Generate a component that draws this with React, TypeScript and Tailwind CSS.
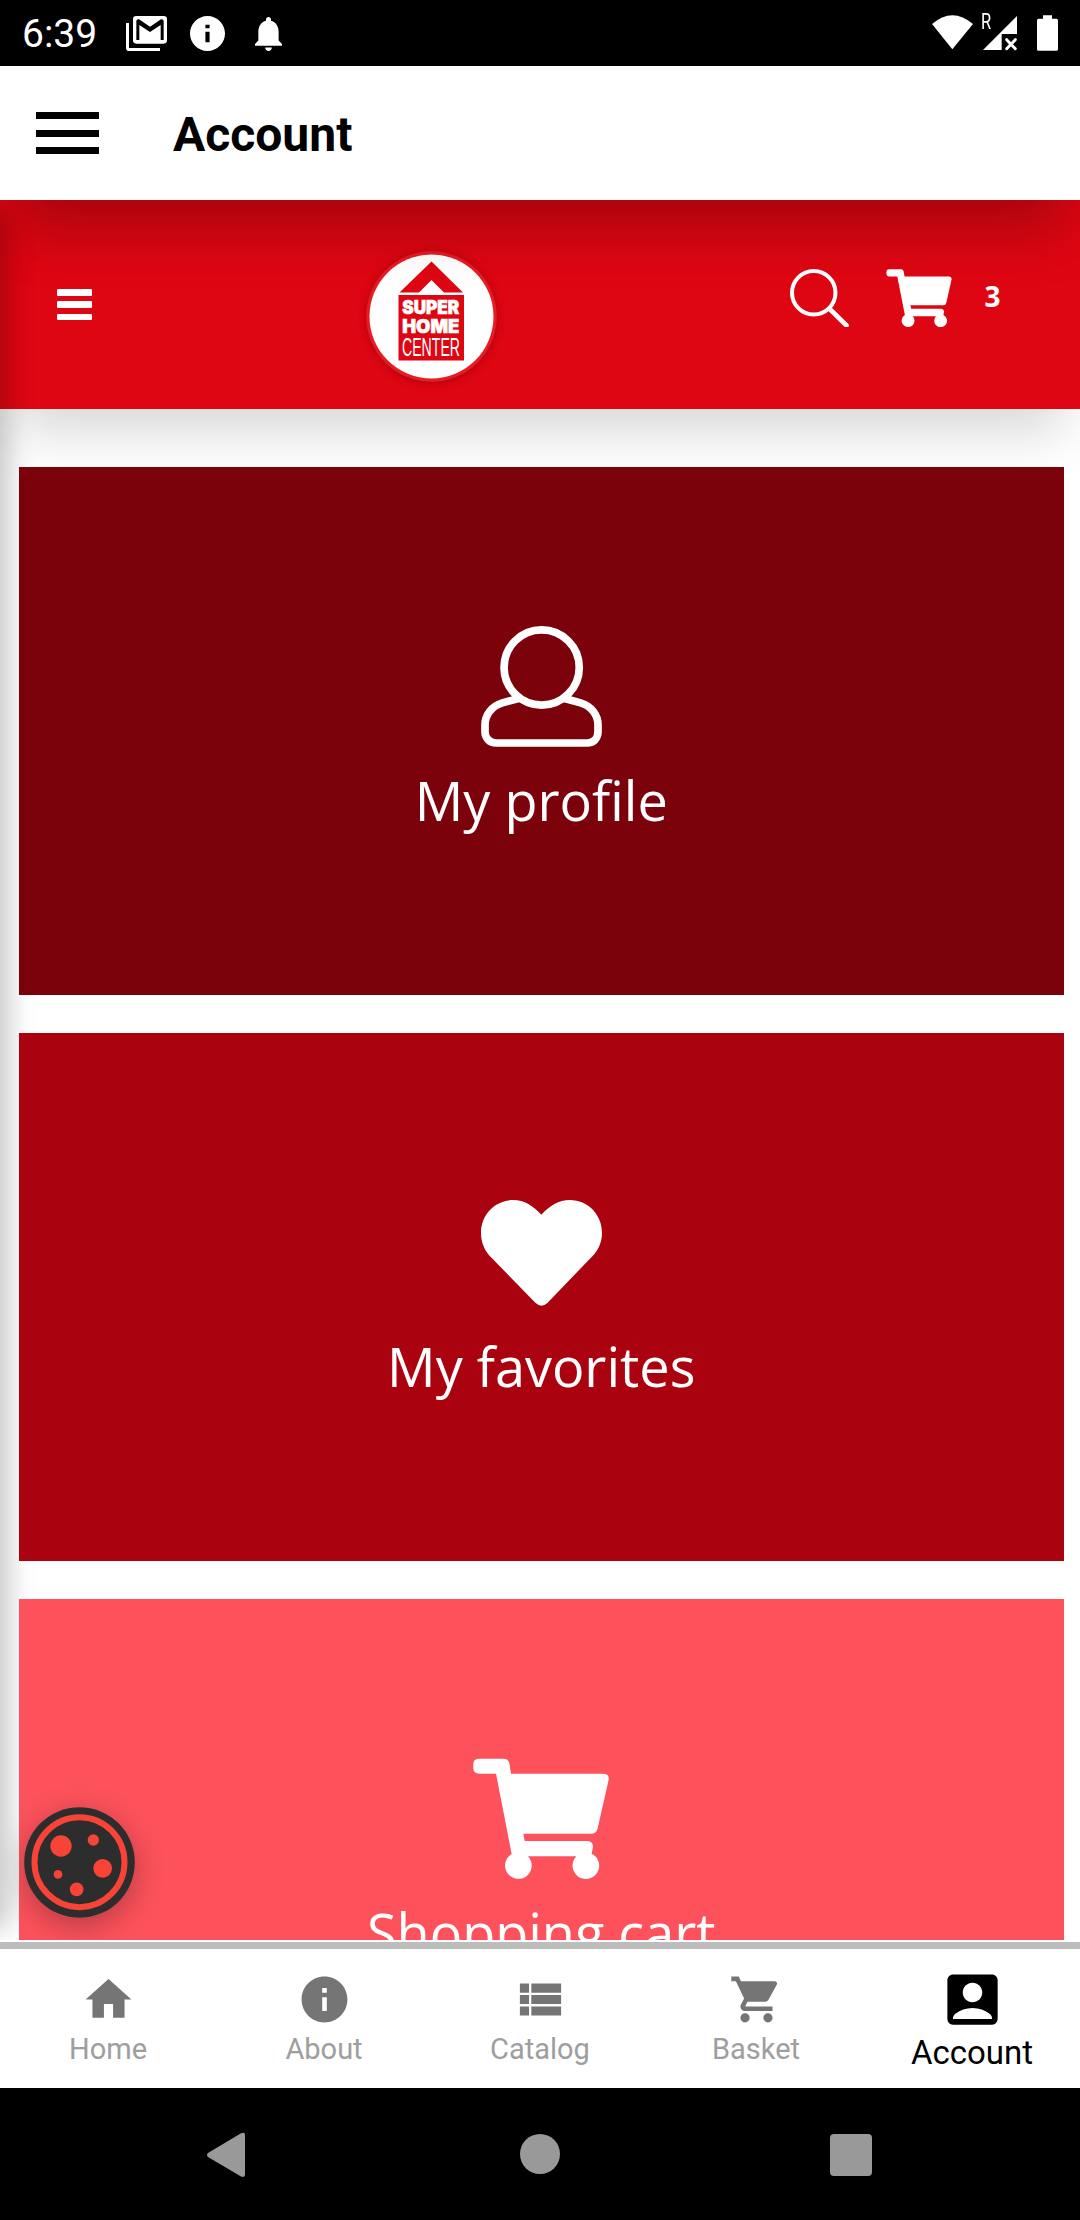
import type { ReactNode } from "react";

function StatusBar() {
  return (
    <div className="flex h-[66px] shrink-0 items-start bg-black text-white">
      <span className="ml-[22px] mt-[11px] w-[76px] whitespace-nowrap font-['Roboto',sans-serif] text-[39px] leading-[46px]">
        6:39
      </span>
      <svg className="ml-[28px] mt-4" width="41" height="35" viewBox="0 0 123 105" fill="currentColor">
        <path d="M0 21h9v75h93v9H10Q0 105 0 95z" />
        <path
          fillRule="evenodd"
          d="M31 0h82q10 0 10 10v63q0 10-10 10H31q-10 0-10-10V10Q21 0 31 0zM31 72h9V27l32 21 32-21v45h9V16q0-7-8-6L72 32 39 10q-8-1-8 6z"
        />
      </svg>
      <svg className="ml-[23px] mt-4" width="35" height="35" viewBox="2 2 20 20" fill="currentColor">
        <path d="M12 2C6.48 2 2 6.48 2 12s4.480 10 10 10 10-4.480 10-10S17.520 2 12 2zm1.200 15h-2.400v-6h2.400v6zm0-8h-2.400V7h2.400v2z" />
      </svg>
      <svg className="ml-[30px] mt-[17px]" width="27" height="34" viewBox="4 2.500 16 19.500" preserveAspectRatio="none" fill="currentColor">
        <path d="M12 22c1.100 0 2-.9 2-2h-4c0 1.100.89 2 2 2zm6-6v-5c0-3.070-1.640-5.640-4.500-6.320V4c0-.83-.67-1.500-1.500-1.500s-1.500.67-1.500 1.500v.68C7.630 5.360 6 7.920 6 11v5l-2 2v1h16v-1l-2-2z" />
      </svg>
      <svg className="ml-auto mt-[15px]" width="41" height="35" viewBox="0 0 123 105" fill="currentColor">
        <path d="M0 27Q61-26 123 27L61 103z" />
      </svg>
      <span className="ml-2 mt-[11px] w-[10px] font-['Roboto',sans-serif] text-[22px] leading-[22px]">
        <span className="block origin-left scale-x-75">R</span>
      </span>
      <svg className="-ml-2 mt-4" width="35" height="35" viewBox="0 0 105 105" fill="currentColor">
        <path d="M102 0v54H56v48H0z" />
        <path d="M71 71l26 27M97 71l-26 27" stroke="currentColor" strokeWidth="9" strokeLinecap="round" />
      </svg>
      <svg className="ml-[19px] mr-[22px] mt-[15px]" width="21" height="36" viewBox="0 0 63 107" fill="currentColor">
        <path d="M18 0h27v11h13q5 0 5 5v86q0 5-5 5H5q-5 0-5-5V16q0-5 5-5h13z" />
      </svg>
    </div>
  );
}

function AppBar() {
  return (
    <div className="relative z-20 flex h-[134.300px] shrink-0 items-start bg-white">
      <div className="ml-9 mt-[46px] flex w-[63px] flex-col gap-[10.500px]">
        <div className="h-[7px] bg-black" />
        <div className="h-[7px] bg-black" />
        <div className="h-[7px] bg-black" />
      </div>
      <h1 className="ml-[74px] mt-[41px] font-['Roboto',sans-serif] text-[48px] font-bold leading-[56px] text-black">
        Account
      </h1>
    </div>
  );
}

function Logo() {
  return (
    <svg className="overflow-visible" width="131" height="131" viewBox="0 0 131 131">
      <circle cx="65.500" cy="65.500" r="65.300" fill="#e81a24" className="drop-shadow-[0_1px_4px_rgba(90,0,0,0.400)]" />
      <circle cx="65.500" cy="65.500" r="62" fill="#fff" />
      <path d="M65.500 10.500L97 41.500H78L65.500 29 53 41.500H33.500z" fill="#de0612" />
      <path d="M32.500 44H98v65.500H32.500z" fill="#de0612" />
      <g fill="#fff" fontFamily="'Inter', sans-serif">
        <text x="36.300" y="63" fontSize="18.500" fontWeight="900" stroke="#fff" strokeWidth="0.600" textLength="57" lengthAdjust="spacingAndGlyphs">
          SUPER
        </text>
        <text x="36.300" y="81.500" fontSize="18.500" fontWeight="900" stroke="#fff" strokeWidth="0.600" textLength="57" lengthAdjust="spacingAndGlyphs">
          HOME
        </text>
        <text x="36" y="105" fontSize="26" fontFamily="'Liberation Sans', sans-serif" textLength="58" lengthAdjust="spacingAndGlyphs">
          CENTER
        </text>
      </g>
    </svg>
  );
}

function CartIcon({ className }: { className: string }) {
  return (
    <svg className={className} viewBox="372 85 408 361" fill="#fff">
      <path d="M388 86h76q14 0 17 14l5 31h278q17 1 15 18l-33 146q-4 16-17 16H523l4 22h189q16 2 16 18l-4 20a40 40 0 1 1-46 8H537a40 40 0 1 1-49-7L441 131h-53q-15-1-15-16v-13q0-15 15-16z" />
    </svg>
  );
}

function PersonIcon() {
  return (
    <svg width="121" height="121" viewBox="274 78 362 362" fill="none" stroke="#fff" strokeWidth="23">
      <circle cx="455.500" cy="202" r="112.500" />
      <path d="M386 295l-48 13C305 318 286 345 286 374v20c0 20 14 34 33 34h273c19 0 32-14 32-34v-20c0-29-19-56-52-66l-48-13" />
    </svg>
  );
}

function HeartIcon() {
  return (
    <svg width="121" height="106" viewBox="335 90 361 317" preserveAspectRatio="none" fill="#fff">
      <path d="M431 90c33 0 60 18 84 44 24-26 52-44 85-44 54 0 96 44 96 98 0 26-9 47-23 64L533 398q-17 16-35 0L359 255c-15-18-24-40-24-67 0-54 42-98 96-98z" />
    </svg>
  );
}

function SiteHeader() {
  return (
    <div className="relative flex h-[209.200px] shrink-0 items-start bg-[#de0612] shadow-[0_38px_52px_-16px_rgba(0,0,0,0.160)]">
      <div className="ml-[57px] mt-[89px] flex w-[35px] flex-col gap-[5.500px]">
        <div className="h-[6.700px] rounded-[1px] bg-white" />
        <div className="h-[6.700px] rounded-[1px] bg-white" />
        <div className="h-[6.700px] rounded-[1px] bg-white" />
      </div>
      <div className="ml-[274px] mt-[50.500px]">
        <Logo />
      </div>
      <svg className="ml-[293px] mt-[68.700px]" width="58.500" height="58.500" viewBox="89 237 175 175" fill="none" stroke="#fff">
        <circle cx="160" cy="308" r="65" strokeWidth="12" />
        <path d="M207 356l51 50" strokeWidth="14" strokeLinecap="round" />
      </svg>
      <CartIcon className="ml-[37px] mt-[68.700px] h-[58px] w-[66px]" />
      <span className="ml-[33px] mt-[77px] font-['Open_Sans',sans-serif] text-[28px] font-bold leading-[38px] text-white">
        3
      </span>
    </div>
  );
}

function Card({ color, pad, gap, icon, label }: { color: string; pad: string; gap: string; icon: ReactNode; label: string }) {
  return (
    <div className={`relative z-10 flex h-[528px] shrink-0 flex-col items-center ${color} ${pad} ${gap}`}>
      {icon}
      <span className="whitespace-nowrap font-['Open_Sans',sans-serif] text-[54px] leading-[74px] text-white">{label}</span>
    </div>
  );
}

function CookieButton() {
  return (
    <div className="absolute left-6 top-[1607px] z-20 rounded-full shadow-[0_8px_30px_rgba(0,0,0,0.280)]">
      <svg width="111" height="111" viewBox="72 83 333 333">
        <circle cx="238.500" cy="249.500" r="166" fill="#2d2d2d" />
        <circle cx="238.500" cy="248.500" r="135" fill="none" stroke="#f74436" strokeWidth="18" />
        <g fill="#f74436">
          <circle cx="183" cy="200" r="32" />
          <circle cx="280" cy="182" r="17" />
          <circle cx="308" cy="267" r="28" />
          <circle cx="174" cy="285" r="13" />
          <circle cx="230" cy="330" r="20.500" />
        </g>
      </svg>
    </div>
  );
}

const tabs = [
  { label: "Home", d: "M10 20v-6h4v6h5v-8h3L12 3 2 12h3v8z" },
  { label: "About", d: "M12 2C6.480 2 2 6.480 2 12s4.480 10 10 10 10-4.480 10-10S17.520 2 12 2zm1 15h-2v-6h2v6zm0-8h-2V7h2v2z" },
  { label: "Catalog", d: "M3 14h4v-4H3v4zm0 5h4v-4H3v4zM3 9h4V5H3v4zm5 5h13v-4H8v4zm0 5h13v-4H8v4zM8 5v4h13V5H8z" },
  {
    label: "Basket",
    d: "M7 18c-1.100 0-1.990.9-1.990 2S5.900 22 7 22s2-.9 2-2-.9-2-2-2zM1 2v2h2l3.600 7.590-1.350 2.450c-.16.28-.25.61-.25.96 0 1.100.9 2 2 2h12v-2H7.420c-.14 0-.25-.11-.25-.25l.03-.12.9-1.630h7.450c.75 0 1.410-.41 1.750-1.030l3.580-6.490c.08-.14.12-.31.12-.48 0-.55-.45-1-1-1H5.210l-.94-2H1zm16 16c-1.100 0-1.990.9-1.990 2s.89 2 1.990 2 2-.9 2-2-.9-2-2-2z",
  },
];

function TabBar() {
  return (
    <div className="relative z-30 flex h-[148px] shrink-0 flex-col bg-white font-['Roboto',sans-serif]">
      <div className="mt-[2px] h-[7px] shrink-0 bg-[#bdbdbd]" />
      <div className="grid flex-1 grid-cols-5">
        {tabs.map((t) => (
          <div key={t.label} className="flex flex-col items-center pt-[23px] text-[#9e9e9e]">
            <svg width="55" height="55" viewBox="0 0 24 24" fill="#757575">
              <path d={t.d} />
            </svg>
            <span className="mt-[5px] text-[29px] leading-[34px]">{t.label}</span>
          </div>
        ))}
        <div className="flex flex-col items-center pt-[17px] text-black">
          <svg width="67" height="67" viewBox="0 0 24 24" fill="currentColor">
            <path d="M19 3H5c-1.100 0-2 .9-2 2v14c0 1.100.9 2 2 2h14c1.100 0 2-.9 2-2V5c0-1.100-.9-2-2-2zm-7 3c1.930 0 3.500 1.570 3.500 3.500S13.930 13 12 13s-3.500-1.570-3.500-3.500S10.070 6 12 6zm7 13H5v-.23c0-.62.28-1.200.76-1.580C7.470 15.820 9.640 15 12 15s4.530.82 6.240 2.190c.48.38.76.97.76 1.580V19z" />
          </svg>
          <span className="mt-px text-[33px] leading-[38px]">Account</span>
        </div>
      </div>
    </div>
  );
}

function SystemNav() {
  return (
    <div className="flex h-[132px] shrink-0 items-start bg-black">
      <svg className="ml-[206px] mt-11" width="40" height="46" viewBox="0 0 40 46" fill="#999">
        <path d="M35 1.200Q39 -.5 39 3v39.500q0 3.500-4 2L2 25q-2-2 0-4z" />
      </svg>
      <div className="ml-[274px] mt-[46px] size-10 rounded-full bg-[#999]" />
      <div className="ml-[270px] mt-[46px] size-[42px] rounded-[4px] bg-[#999]" />
    </div>
  );
}

export default function App() {
  return (
    <div className="flex h-[2220px] w-[1080px] flex-col overflow-hidden bg-white">
      <StatusBar />
      <AppBar />
      <div className="relative flex h-[1739.700px] shrink-0 flex-col overflow-hidden bg-white">
        <SiteHeader />
        <div className="mt-[57.500px] flex flex-col gap-[38px] pl-[19px] pr-[16.500px]">
          <Card color="bg-[#7b010b]" pad="pt-[159px]" gap="gap-[16px]" icon={<PersonIcon />} label="My profile" />
          <Card color="bg-[#aa030f]" pad="pt-[167px]" gap="gap-[23px]" icon={<HeartIcon />} label="My favorites" />
          <Card
            color="bg-[#fd525b]"
            pad="pt-[159px]"
            gap="gap-[16px]"
            icon={<CartIcon className="h-[121px] w-[136px]" />}
            label="Shopping cart"
          />
        </div>
        {/* Shade cast by the app bar */}
        <div className="absolute -top-52 left-0 h-52 w-full shadow-[0_42px_60px_-16px_rgba(0,0,0,0.260)]" />
        {/* Shade along the edge of the closed drawer */}
        <div className="absolute -left-40 top-0 h-full w-40 shadow-[20px_0_26px_-12px_rgba(0,0,0,0.230)]" />
        <CookieButton />
      </div>
      <TabBar />
      <SystemNav />
    </div>
  );
}
